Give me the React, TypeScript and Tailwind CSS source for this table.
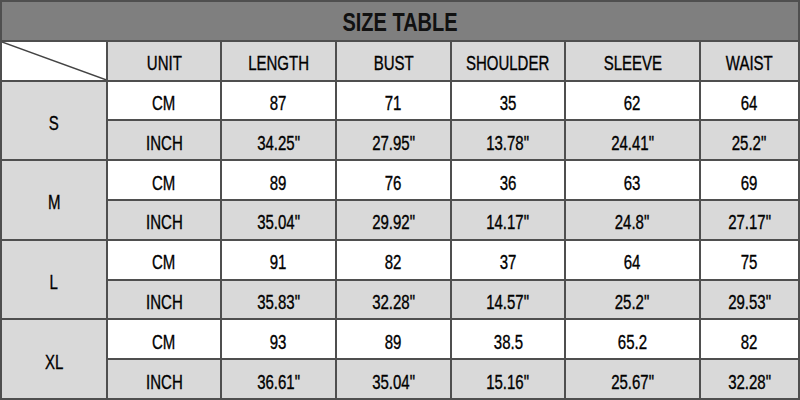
const HEADERS = ['UNIT', 'LENGTH', 'BUST', 'SHOULDER', 'SLEEVE', 'WAIST'];

const SIZES = [
  { size: 'S', cm: ['87', '71', '35', '62', '64'], inch: ['34.25"', '27.95"', '13.78"', '24.41"', '25.2"'] },
  { size: 'M', cm: ['89', '76', '36', '63', '69'], inch: ['35.04"', '29.92"', '14.17"', '24.8"', '27.17"'] },
  { size: 'L', cm: ['91', '82', '37', '64', '75'], inch: ['35.83"', '32.28"', '14.57"', '25.2"', '29.53"'] },
  { size: 'XL', cm: ['93', '89', '38.5', '65.2', '82'], inch: ['36.61"', '35.04"', '15.16"', '25.67"', '32.28"'] },
];

function Cell({ children, gray, className = '' }: { children: React.ReactNode; gray?: boolean; className?: string }) {
  return (
    <div className={`flex items-center justify-center pt-[5px] ${gray ? 'bg-[#d9d9d9]' : 'bg-white'} ${className}`}>
      <span className="inline-block scale-x-[0.75] whitespace-nowrap [-webkit-text-stroke:0.35px_#000]">{children}</span>
    </div>
  );
}

export default function App() {
  return (
    <div
      className="grid h-[400px] w-[800px] grid-cols-[104px_112px_113px_113px_112px_133px_97px] grid-rows-[repeat(10,minmax(0,1fr))] gap-[2px] bg-[#4f4f4f] p-[2px] text-[20px] text-black"
      style={{ fontFamily: '"Liberation Sans", Arial, sans-serif' }}
    >
      <div className="col-span-7 flex items-center justify-center bg-[#7f7f7f] pt-[3px] text-[25px] font-bold text-[#111]">
        <span className="inline-block scale-x-[0.8]">SIZE TABLE</span>
      </div>

      <div className="relative bg-white">
        <svg className="absolute inset-0 h-full w-full" viewBox="0 0 100 100" preserveAspectRatio="none">
          <line x1="0" y1="0" x2="100" y2="100" stroke="#444" strokeWidth="1.5" vectorEffect="non-scaling-stroke" />
        </svg>
      </div>
      {HEADERS.map((h) => (
        <Cell key={h} gray>
          {h}
        </Cell>
      ))}

      {SIZES.map((s) => (
        <SizeRows key={s.size} size={s.size} cm={s.cm} inch={s.inch} />
      ))}
    </div>
  );
}

function SizeRows({ size, cm, inch }: { size: string; cm: string[]; inch: string[] }) {
  return (
    <>
      <Cell gray className="row-span-2">
        {size}
      </Cell>
      <Cell>CM</Cell>
      {cm.map((v, i) => (
        <Cell key={'cm' + i}>{v}</Cell>
      ))}
      <Cell gray>INCH</Cell>
      {inch.map((v, i) => (
        <Cell key={'in' + i} gray>
          {v}
        </Cell>
      ))}
    </>
  );
}
